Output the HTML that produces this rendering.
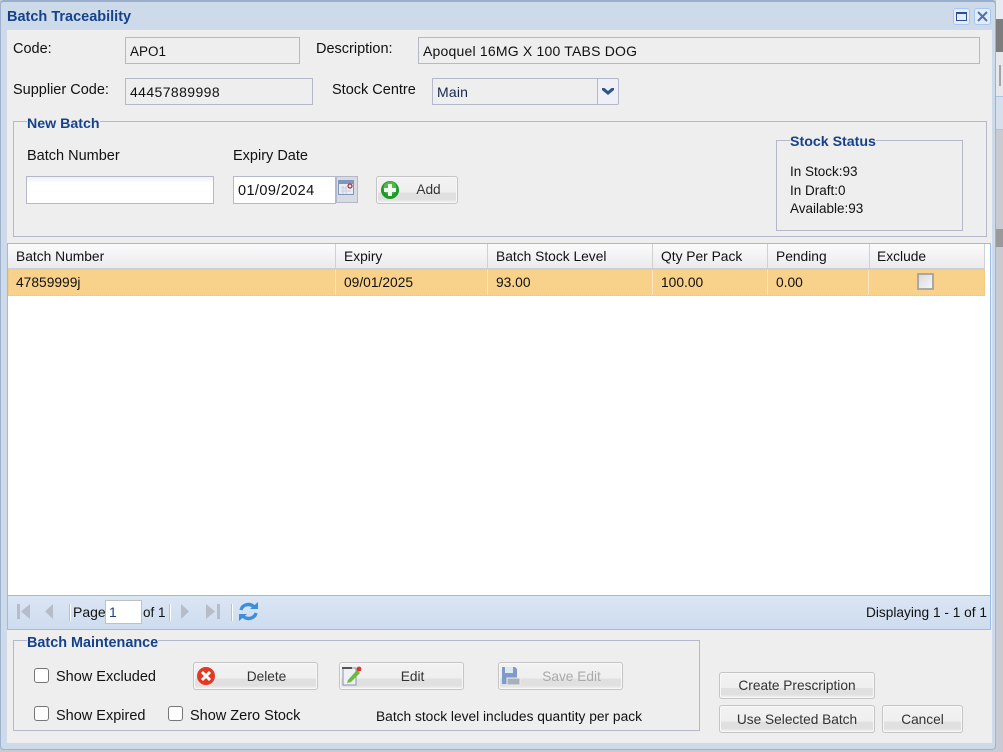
<!DOCTYPE html>
<html><head><meta charset="utf-8"><style>
html,body{margin:0;padding:0;width:1003px;height:752px;overflow:hidden;background:#c8ccd2}
*{box-sizing:border-box}
div,span{position:absolute;white-space:nowrap}
.t{font:14.5px/16px "Liberation Sans",sans-serif;color:#111}
.a{font:13.5px/16px "Liberation Sans",sans-serif;color:#111}
.h{font:bold 14.2px/16px "Liberation Sans",sans-serif;color:#15428b;background:#eee;padding:0}
.f{border:1px solid #b5b8c8;background:#eee;font:14px/22px "Liberation Sans",sans-serif;color:#111;padding:2px 0 0 4px;letter-spacing:.2px}
.fs{border:1px solid #b5b8c8}
.b{border:1px solid #c4c4c4;border-radius:3px;background:linear-gradient(#f2f2f2 0,#efefef 60%,#e0e0e0 60%,#e0e0e0 90%,#ececec 90%);font:13.7px/27px "Liberation Sans",sans-serif;color:#333;text-align:center;box-shadow:inset 0 0 0 1px #f8f8f8}
.col{top:244px;height:25px;border-right:1px solid #d0d0d0;font:13.8px/26px "Liberation Sans",sans-serif;color:#111;padding-left:8px}
.cell{top:270px;height:25px;border-right:1px solid #fbe5c0;font:13.8px/25px "Liberation Sans",sans-serif;color:#111;padding-left:8px}
.cb{width:15px;height:15px;border:1px solid #767676;border-radius:3px;background:#fff}
.sep{height:17px;top:604px;background:#a9c4e6;border-right:1px solid #fff;width:2px}
</style></head><body>
<div style="left:996px;top:0;width:7px;height:19px;background:#e8ecf0"></div>
<div style="left:996px;top:19px;width:7px;height:33px;background:#7d7d7d"></div>
<div style="left:996px;top:52px;width:7px;height:44px;background:#e6e8ec"></div>
<div style="left:999px;top:65px;width:2px;height:21px;background:#a0a4ac"></div>
<div style="left:996px;top:96px;width:7px;height:34px;background:#d6e0ec;border-top:1px solid #a9c4e6;border-bottom:1px solid #a9c4e6"></div>
<div style="left:996px;top:229px;width:7px;height:18px;background:#9a9a9a"></div>
<div style="left:0;top:0;width:996px;height:750px;background:#cddaea;border:1px solid #9fb2cc;border-top:2px solid #99aecb;border-radius:4px"></div>
<div style="left:7px;top:30px;width:985px;height:713px;background:#eee"></div>
<div style="left:7px;top:9px;font:bold 14.5px/16px 'Liberation Sans',sans-serif;color:#15428b">Batch Traceability</div>

<div style="left:953px;top:8px;width:17px;height:17px;border:1px solid #a8c6f0;border-radius:3px;background:#e4eefb"></div>
<div style="left:956px;top:12px;width:11px;height:9px;border:1.5px solid #2c4f96;border-top:2px solid #2c4f96"></div>
<div style="left:974px;top:8px;width:17px;height:17px;border:1px solid #a8c6f0;border-radius:3px;background:#e4eefb"></div>
<svg style="position:absolute;left:974px;top:8px" width="17" height="17"><path d="M4 4L13 13M13 4L4 13" stroke="#5470a8" stroke-width="2"/></svg>

<div class="t" style="left:13px;top:41px">Code:</div>
<div class="f" style="left:125px;top:37px;width:175px;height:27px;font-size:13.5px;letter-spacing:0;padding-top:3px">APO1</div>
<div class="t" style="left:316px;top:41px">Description:</div>
<div class="f" style="left:418px;top:37px;width:562px;height:27px">Apoquel 16MG X 100 TABS DOG</div>
<div class="t" style="left:13px;top:82px">Supplier Code:</div>
<div class="f" style="left:125px;top:78px;width:188px;height:27px;letter-spacing:.4px">44457889998</div>
<div class="t" style="left:332px;top:82px">Stock Centre</div>
<div class="f" style="left:432px;top:78px;width:166px;height:27px;color:#15284b">Main</div>
<div style="left:597px;top:78px;width:22px;height:27px;border:1px solid #b5b8c8;background:#eef0f5;border-radius:0 2px 2px 0"></div>
<svg style="position:absolute;left:597px;top:78px" width="22" height="27"><path d="M5 10L7.5 10L11 13L14.5 10L17 10L17 12L11 17L5 12Z" fill="#2f5591"/></svg>

<div class="fs" style="left:13px;top:121px;width:974px;height:116px"></div>
<div class="h" style="left:27px;top:116px">New Batch</div>
<div class="t" style="left:27px;top:148px">Batch Number</div>
<div class="t" style="left:233px;top:148px">Expiry Date</div>
<div style="left:26px;top:176px;width:188px;height:28px;border:1px solid #b5b8c8;background:linear-gradient(#f0f0f0,#fff 6px)"></div>
<div style="left:233px;top:176px;width:103px;height:28px;border:1px solid #b5b8c8;background:#fff;font:14.5px/29px 'Liberation Sans',sans-serif;color:#111;padding-left:4px;letter-spacing:.4px">01/09/2024</div>
<div style="left:336px;top:176px;width:22px;height:27px;border:1px solid #b5b8c8;background:#d8dce2"></div>
<svg style="position:absolute;left:338px;top:180px" width="17" height="16"><rect x=".5" y=".5" width="15" height="14" fill="#e8edf4" stroke="#7f97bd"/><rect x="1" y="1" width="14" height="3" fill="#7f97bd"/><circle cx="12" cy="6" r="2" fill="none" stroke="#b03040" stroke-width="1.3"/><path d="M3 8H9M3 11H13M5 6V14M8 6V14" stroke="#c8d0dc"/></svg>
<div class="b" style="left:376px;top:176px;width:82px;height:28px;padding-left:23px;line-height:26px">Add</div>
<svg style="position:absolute;left:380px;top:180px" width="20" height="20"><circle cx="10" cy="10" r="9" fill="#1f9a2a"/><circle cx="10" cy="8" r="6.5" fill="#6fcf5f" opacity=".6"/><path d="M8 4H12V8H16V12H12V16H8V12H4V8H8Z" fill="#f2fff0"/></svg>

<div class="fs" style="left:776px;top:140px;width:187px;height:91px"></div>
<div class="h" style="left:790px;top:134px">Stock Status</div>
<div class="a" style="left:790px;top:164px">In Stock:93</div>
<div class="a" style="left:790px;top:183px">In Draft:0</div>
<div class="a" style="left:790px;top:201px">Available:93</div>

<div style="left:7px;top:243px;width:984px;height:387px;background:#fff;border:1px solid #99bbe8"></div>
<div style="left:8px;top:244px;width:977px;height:25px;background:linear-gradient(#fbfbfb,#ebebef);border-bottom:1px solid #d0d0d0"></div>
<div class="col" style="left:8px;width:328px">Batch Number</div>
<div class="col" style="left:336px;width:152px">Expiry</div>
<div class="col" style="left:488px;width:165px">Batch Stock Level</div>
<div class="col" style="left:653px;width:115px">Qty Per Pack</div>
<div class="col" style="left:768px;width:102px">Pending</div>
<div class="col" style="left:870px;width:115px;padding-left:7px">Exclude</div>
<div style="left:8px;top:269px;width:977px;height:27px;background:#f8d18a;border:1px dotted #b5cbe8"></div>
<div class="cell" style="left:8px;width:328px">47859999j</div>
<div class="cell" style="left:336px;width:152px">09/01/2025</div>
<div class="cell" style="left:488px;width:165px">93.00</div>
<div class="cell" style="left:653px;width:115px">100.00</div>
<div class="cell" style="left:768px;width:101px">0.00</div>
<div style="left:917px;top:273px;width:17px;height:17px;border:2px solid #a8a8a8;background:linear-gradient(135deg,#d8dadc,#f6f6f6)"></div>

<div style="left:8px;top:595px;width:982px;height:34px;background:linear-gradient(#dbe6f5,#cddcee);border-top:1px solid #99bbe8"></div>
<svg style="position:absolute;left:14px;top:602px" width="220" height="20" fill="#b6bdc6">
<rect x="3" y="2" width="3" height="15"/><path d="M16 2V17L7 9.5Z"/>
<path d="M39 2V17L31 9.5Z"/>
<path d="M167 2V17L175 9.5Z"/>
<path d="M192 2L201 9.5L192 17Z"/><rect x="203" y="2" width="3" height="15"/></svg>
<div class="sep" style="left:69px"></div>
<div class="a" style="left:73px;top:604px;font-size:14px">Page</div>
<div style="left:105px;top:600px;width:37px;height:24px;background:#fff;border:1px solid #c0c0c0;font:14px/23px 'Liberation Sans',sans-serif;color:#15428b;padding-left:3px">1</div>
<div class="a" style="left:143px;top:605px">of 1</div>
<div class="sep" style="left:169px"></div>
<div class="sep" style="left:231px"></div>
<svg style="position:absolute;left:238px;top:601px" width="21" height="21" fill="none" stroke="#3b8fdc" stroke-width="3.4"><path d="M3 9A7.5 7 0 0 1 16 6"/><path d="M18 12A7.5 7 0 0 1 5 15"/><path d="M12 8H20V1Z" fill="#3b8fdc" stroke="none"/><path d="M9 13H1V20Z" fill="#3b8fdc" stroke="none"/></svg>
<div style="left:866px;top:605px;font:13.7px/16px 'Liberation Sans',sans-serif;color:#111">Displaying 1 - 1 of 1</div>

<div class="fs" style="left:13px;top:640px;width:687px;height:91px"></div>
<div class="h" style="left:27px;top:635px;font-size:14.4px">Batch Maintenance</div>
<div class="cb" style="left:34px;top:668px"></div>
<div class="t" style="left:56px;top:669px">Show Excluded</div>
<div class="cb" style="left:34px;top:706px"></div>
<div class="t" style="left:56px;top:708px">Show Expired</div>
<div class="cb" style="left:168px;top:706px"></div>
<div class="t" style="left:190px;top:708px">Show Zero Stock</div>
<div class="a" style="left:376px;top:709px;font-size:13.76px">Batch stock level includes quantity per pack</div>

<div class="b" style="left:193px;top:662px;width:125px;height:28px;padding-left:22px">Delete</div>
<svg style="position:absolute;left:196px;top:666px" width="20" height="20"><circle cx="10" cy="10" r="9" fill="#e23a22"/><path d="M6 6L14 14M14 6L6 14" stroke="#fff" stroke-width="3"/></svg>
<div class="b" style="left:339px;top:662px;width:125px;height:28px;padding-left:22px">Edit</div>
<svg style="position:absolute;left:341px;top:665px" width="22" height="22"><rect x="2" y="3" width="13" height="17" fill="#eef1f6" stroke="#8a93a8"/><path d="M1 3H11" stroke="#555" stroke-width="2"/><path d="M7 15L16 5L19 8L10 17L6 18Z" fill="#6cbb3c"/><circle cx="18" cy="4" r="2.4" fill="#e03030"/></svg>
<div class="b" style="left:498px;top:662px;width:125px;height:28px;padding-left:22px;color:#aaa">Save Edit</div>
<svg style="position:absolute;left:501px;top:666px" width="20" height="20"><path d="M1 1H14L16 3V18H1Z" fill="#7d9ccb"/><rect x="4" y="1" width="8" height="6" fill="#dfe7f2"/><rect x="6" y="12" width="13" height="7" fill="#aab0b8" stroke="#eee"/></svg>

<div class="b" style="left:719px;top:672px;width:156px;height:27px;line-height:26px">Create Prescription</div>
<div class="b" style="left:719px;top:705px;width:156px;height:28px">Use Selected Batch</div>
<div class="b" style="left:882px;top:705px;width:81px;height:28px">Cancel</div>
</body></html>
